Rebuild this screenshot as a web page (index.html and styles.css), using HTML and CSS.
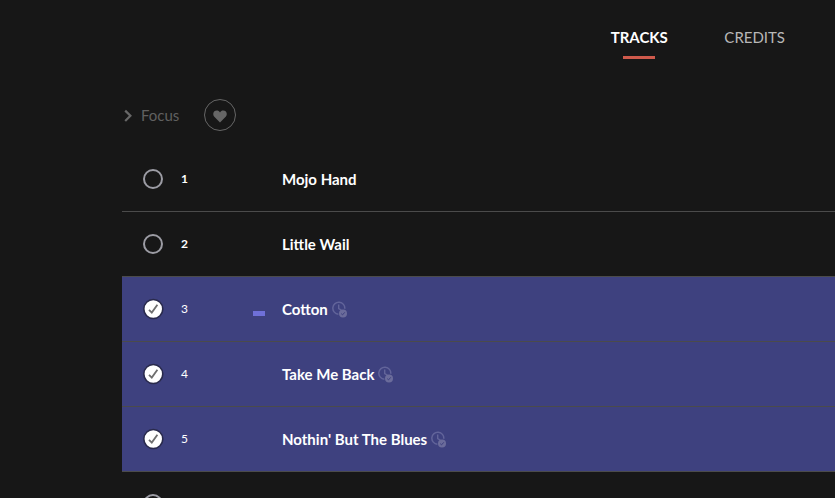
FILE: index.html
```
<!DOCTYPE html>
<html lang="en">
<head>
    <meta charset="UTF-8">
    <meta name="viewport" content="width=device-width, initial-scale=1.0">
    <title>Tracks</title>
    <link rel="stylesheet" href="styles.css">
</head>
<body>
  <!-- shared icons -->
  <svg class="icon-defs" width="0" height="0">
     <symbol id="check" viewBox="0 0 22 22">
        <circle cx="11.3" cy="11" r="9.5" fill="#fff" stroke="#292a4c" stroke-width="1.6"/>
        <path d="M7 11.8l2.8 2.8 5.6-7.8" fill="none" stroke="#6e6e6e" stroke-width="1.8"/>
     </symbol>
     <symbol id="clock" viewBox="0 0 16 17">
        <path d="M6.4 13.2A6 6 0 1 1 12.8 7.8" fill="none" stroke="#62649a" stroke-width="1.5"/>
        <path d="M6.7 3.6v4l2.6 1.6" fill="none" stroke="#62649a" stroke-width="1.4"/>
        <circle cx="11" cy="12.5" r="4" fill="#6b6c9b"/>
        <path d="M9.2 12.6l1.3 1.3 2.3-2.6" fill="none" stroke="#3e417f" stroke-width="1"/>
     </symbol>
  </svg>

  <nav class="tabs">
     <a class="tab active">TRACKS</a>
     <a class="tab">CREDITS</a>
  </nav>

  <main class="content">
     <div class="toolbar">
        <svg class="chevron" width="10" height="14" viewBox="0 0 10 14"><path d="M2.2 1.6l5.2 5.2-5.2 5.2" fill="none" stroke="#686868" stroke-width="2.2"/></svg>
        <span class="focus">Focus</span>
        <button class="like" type="button">
           <svg width="14" height="13" viewBox="0 0 14 13"><path d="M7 12.6L1.3 6.8C-.1 5.3-.1 3 1.1 1.6 2.6 0 5.2.1 6.5 1.7l.5.7.5-.7C8.8.1 11.4 0 12.9 1.6c1.2 1.4 1.2 3.7-.2 5.2z" fill="#666"/></svg>
        </button>
     </div>

     <div class="track-list">
        <div class="track">
           <span class="radio"></span>
           <span class="number">1</span>
           <span class="playing"></span>
           <span class="title">Mojo Hand</span>
        </div>
        <div class="track">
           <span class="radio"></span>
           <span class="number">2</span>
           <span class="playing"></span>
           <span class="title">Little Wail</span>
        </div>
        <div class="track selected">
           <svg class="check"><use href="#check"/></svg>
           <span class="number">3</span>
           <span class="playing"><i class="bar"></i></span>
           <span class="title">Cotton</span>
           <svg class="clock"><use href="#clock"/></svg>
        </div>
        <div class="track selected">
           <svg class="check"><use href="#check"/></svg>
           <span class="number">4</span>
           <span class="playing"></span>
           <span class="title">Take Me Back</span>
           <svg class="clock"><use href="#clock"/></svg>
        </div>
        <div class="track selected">
           <svg class="check"><use href="#check"/></svg>
           <span class="number">5</span>
           <span class="playing"></span>
           <span class="title">Nothin' But The Blues</span>
           <svg class="clock"><use href="#clock"/></svg>
        </div>
        <div class="track">
           <span class="radio"></span>
        </div>
     </div>
  </main>
</body>
</html>
```
FILE: styles.css
```
* {
  margin: 0;
  padding: 0;
  box-sizing: border-box;
}

body {
  height: 100vh;
  overflow: hidden;
  background-color: #171717;
  color: #fff;
  font-family: Lato, "Liberation Sans", sans-serif;
  font-size: 15px;
}

.icon-defs {
  display: none;
}

.tabs {
  display: flex;
  justify-content: flex-end;
  gap: 56.5px;
  height: 83px;
  padding: 27px 50px 0 0;
}

.tab {
  color: #b8b8b8;
  line-height: 20px;
}

.tab.active {
  color: #fff;
  font-weight: 700;
}

.tab.active::after {
  content: "";
  display: block;
  width: 32px;
  height: 3px;
  margin: 9px auto 0;
  background-color: #cf5a4c;
}

.content {
  height: calc(100vh - 83px);
  padding-left: 122px;
  overflow: hidden;
}

.toolbar {
  display: flex;
  align-items: center;
  height: 64px;
}

.chevron {
  margin: 2px 0 0 1px;
}

.focus {
  width: 63px;
  margin-left: 8px;
  color: #606060;
  font-size: 15px;
  line-height: 18px;
}

.like {
  display: flex;
  align-items: center;
  justify-content: center;
  width: 32px;
  height: 32px;
  padding-top: 2px;
  background: none;
  border: 1px solid #666;
  border-radius: 50%;
}

.track {
  display: flex;
  align-items: center;
  height: 65px;
  padding-left: 20px;
  border-bottom: 1px solid #4b4b4b;
}

.track.selected {
  background-color: #3e417f;
}

.radio {
  width: 20px;
  height: 20px;
  margin: 0 1px;
  border: 2px solid #9c9ca4;
  border-radius: 50%;
}

.check {
  width: 22px;
  height: 22px;
}

.number {
  width: 72px;
  margin-left: 17px;
  padding-bottom: 2px;
  font-size: 12px;
  font-weight: 700;
}

.selected .number {
  font-weight: 400;
}

.playing {
  width: 29px;
}

.bar {
  display: block;
  width: 12px;
  height: 5px;
  margin-top: 9px;
  background-color: #6f70d8;
}

.title {
  font-weight: 700;
}

.clock {
  width: 16px;
  height: 17px;
  margin: 1px 0 0 4px;
}
```
